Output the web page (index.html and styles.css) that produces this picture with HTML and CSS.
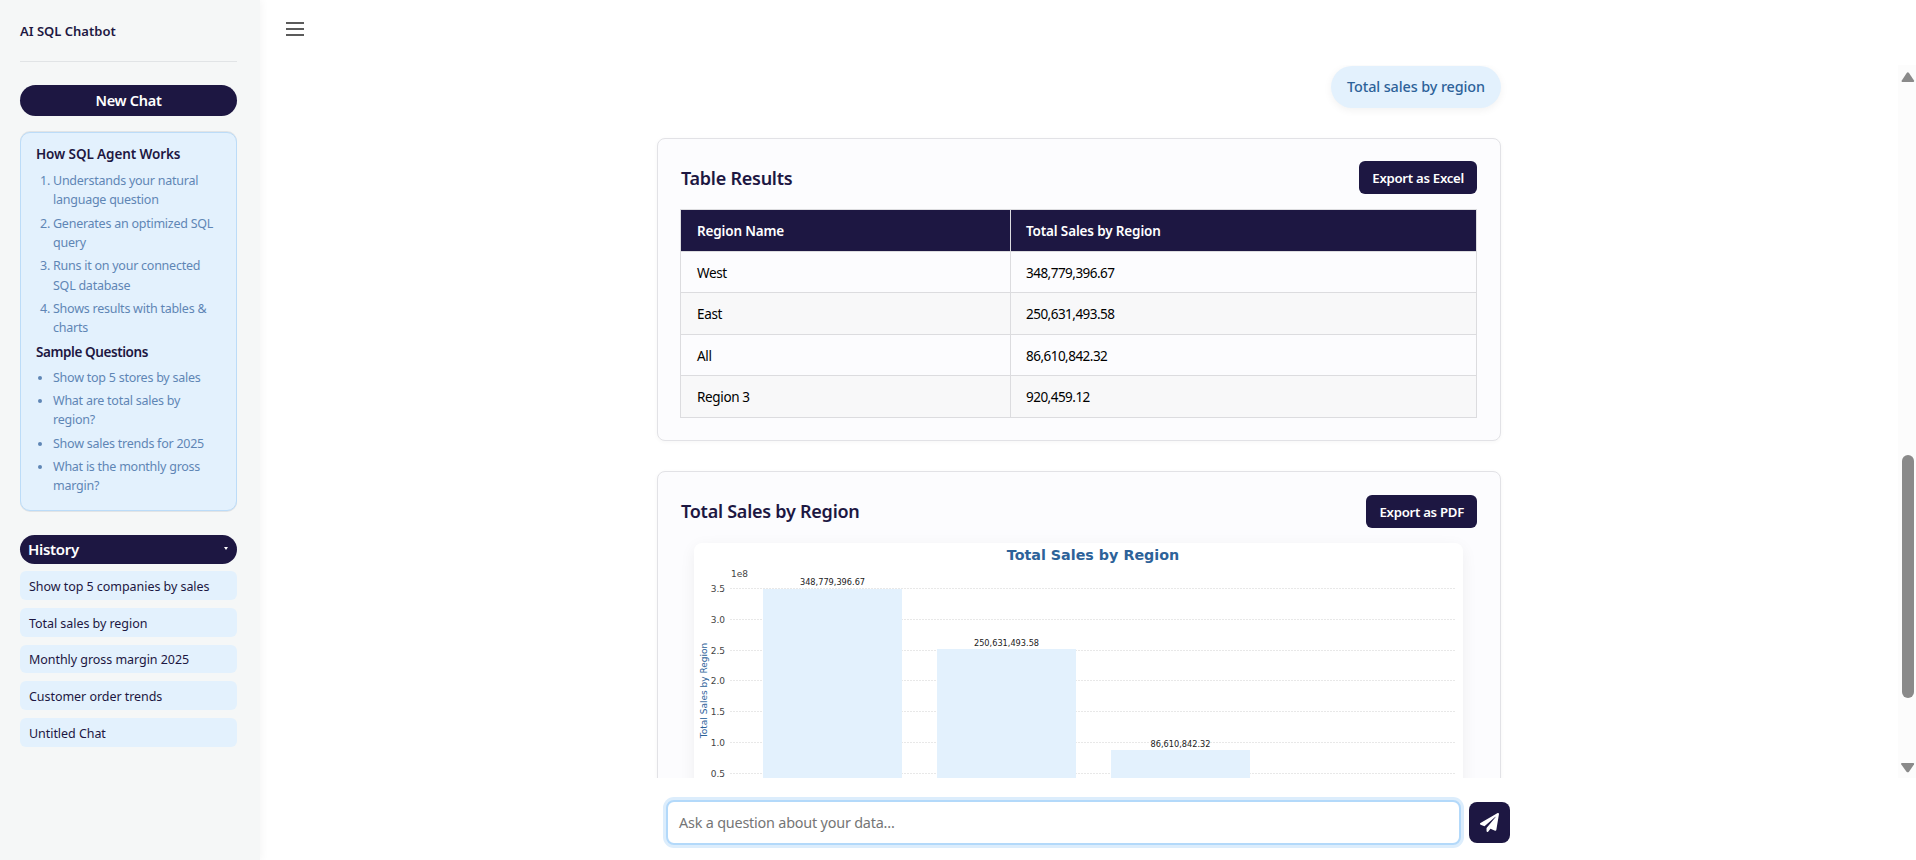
FILE: index.html
```html
<!DOCTYPE html>
<html lang="en">
<head>
<meta charset="utf-8">
<title>AI SQL Chatbot</title>
<link rel="stylesheet" href="styles.css">
</head>
<body>
<div class="app">
  <aside class="sidebar">
    <div class="brand">AI SQL Chatbot</div>
    <button class="new-chat">New Chat</button>
    <div class="info">
      <h3 class="info-title">How SQL Agent Works</h3>
      <ol class="info-list">
        <li>Understands your natural language question</li>
        <li>Generates an optimized SQL query</li>
        <li>Runs it on your connected SQL database</li>
        <li>Shows results with tables &amp; charts</li>
      </ol>
      <h3 class="info-title sample">Sample Questions</h3>
      <ul class="info-list sample-list">
        <li>Show top 5 stores by sales</li>
        <li>What are total sales by region?</li>
        <li>Show sales trends for 2025</li>
        <li>What is the monthly gross margin?</li>
      </ul>
    </div>
    <div class="history-head"><span>History</span><i class="caret"></i></div>
    <div class="history-list">
      <div class="history-item">Show top 5 companies by sales</div>
      <div class="history-item">Total sales by region</div>
      <div class="history-item">Monthly gross margin 2025</div>
      <div class="history-item">Customer order trends</div>
      <div class="history-item">Untitled Chat</div>
    </div>
  </aside>
  <main class="main">
    <div class="topbar">
      <button class="menu-btn" aria-label="Menu"><span></span><span></span><span></span></button>
    </div>
    <div class="chat-row">
      <div class="chat">
        <div class="chat-inner">
          <div class="bubble-row"><div class="bubble">Total sales by region</div></div>
          <section class="card">
            <div class="card-head">
              <h2 class="card-title">Table Results</h2>
              <button class="export">Export as Excel</button>
            </div>
            <table class="results">
              <thead><tr><th class="col-a">Region Name</th><th>Total Sales by Region</th></tr></thead>
              <tbody>
                <tr><td>West</td><td>348,779,396.67</td></tr>
                <tr><td>East</td><td>250,631,493.58</td></tr>
                <tr><td>All</td><td>86,610,842.32</td></tr>
                <tr><td>Region 3</td><td>920,459.12</td></tr>
              </tbody>
            </table>
          </section>
          <section class="card">
            <div class="card-head">
              <h2 class="card-title">Total Sales by Region</h2>
              <button class="export">Export as PDF</button>
            </div>
            <div class="chart-box">
              <svg class="chart" width="769" height="320" viewBox="0 0 769 320">
                <text class="c-title" x="399" y="17" text-anchor="middle">Total Sales by Region</text>
                <text class="c-tick" x="37" y="34">1e8</text>
                <g class="c-grid">
                  <line x1="36" x2="762" y1="45.5" y2="45.5"/>
                  <line x1="36" x2="762" y1="76.5" y2="76.5"/>
                  <line x1="36" x2="762" y1="107.5" y2="107.5"/>
                  <line x1="36" x2="762" y1="137.5" y2="137.5"/>
                  <line x1="36" x2="762" y1="168.5" y2="168.5"/>
                  <line x1="36" x2="762" y1="199.5" y2="199.5"/>
                  <line x1="36" x2="762" y1="230.5" y2="230.5"/>
                </g>
                <g class="c-tick" text-anchor="end">
                  <text x="31" y="49">3.5</text>
                  <text x="31" y="80">3.0</text>
                  <text x="31" y="111">2.5</text>
                  <text x="31" y="141">2.0</text>
                  <text x="31" y="172">1.5</text>
                  <text x="31" y="203">1.0</text>
                  <text x="31" y="234">0.5</text>
                </g>
                <text class="c-ylabel" transform="translate(13 147.500) rotate(-90)" text-anchor="middle">Total Sales by Region</text>
                <g class="c-bar">
                  <rect x="69" y="46" width="139" height="274"/>
                  <rect x="243" y="106" width="139" height="214"/>
                  <rect x="417" y="207" width="139" height="113"/>
                </g>
                <g class="c-val" text-anchor="middle">
                  <text x="138.500" y="42">348,779,396.67</text>
                  <text x="312.500" y="103">250,631,493.58</text>
                  <text x="486.500" y="204">86,610,842.32</text>
                </g>
              </svg>
            </div>
          </section>
        </div>
      </div>
      <div class="scrollbar">
        <svg class="arrow" width="18" height="20" viewBox="0 0 18 20"><path d="M4 17 L15.500 17 Q16.500 16.700 16 15.500 L11 8 Q9.800 6.500 8.700 8 L3.800 15.500 Q3.200 16.700 4 17 Z"/></svg>
        <div class="track"><div class="thumb"></div></div>
        <svg class="arrow" width="18" height="20" viewBox="0 0 18 20"><path d="M3.500 5 L15.500 5 Q16.500 5.300 16 6.500 L11 13.700 Q9.700 15 8.500 13.700 L3.300 6.500 Q2.800 5.300 3.500 5 Z"/></svg>
      </div>
    </div>
    <div class="composer">
      <div class="composer-inner">
        <div class="ask">Ask a question about your data...</div>
        <button class="send" aria-label="Send">
          <svg width="19" height="19" viewBox="0 0 512 512"><path fill="#fff" d="M476 3.200 12.500 270.600c-18.100 10.400-15.800 35.600 2.200 43.200L121 358.400l287.300-253.200c5.500-4.900 13.300 2.600 8.600 8.300L176 407v80.500c0 23.600 28.500 32.900 42.500 15.800L282 426l124.600 52.200c14.200 6 30.400-2.900 33-18.200l72-432C515 7.800 493.300-6.800 476 3.200z"/></svg>
        </button>
      </div>
    </div>
  </main>
</div>
</body>
</html>
```
FILE: styles.css
```css
* { box-sizing: border-box; }
html, body { margin: 0; height: 100%; overflow: hidden; }
body { font-family: "Noto Sans", "Open Sans", sans-serif; color: #1d1742; background: #fff; }
h2, h3 { margin: 0; }
button { font-family: inherit; border: 0; cursor: pointer; }

.app { display: flex; height: 860px; }

.sidebar {
  width: 260px; flex: none; padding: 0 23px 0 20px;
  background: #f5f7f7; box-shadow: 2px 0 8px rgba(0, 0, 0, .04);
  display: flex; flex-direction: column; z-index: 1;
}
.brand {
  height: 62px; padding-top: 21px; border-bottom: 1px solid #e1e4e6;
  font-size: 13px; font-weight: 600; line-height: 20px;
}
.new-chat {
  margin-top: 23px; height: 31px; padding: 0 0 2px; border-radius: 16px; background: #1d1742; color: #fff;
  font-size: 14.500px; font-weight: 600; letter-spacing: -.3px;
}
.info {
  margin-top: 16px; height: 379px; padding: 11px 15px 0;
  background: #e3f1fd; border: 1px solid #bcdcf8; border-radius: 10px;
  box-shadow: 0 -1px 0 #e1e4e6, 0 1px 0 #e1e4e6;
}
.info-title { font-size: 13.500px; font-weight: 600; line-height: 20px; letter-spacing: -.1px; }
.info-title.sample { margin-top: 2px; letter-spacing: -.42px; }
.info-list { margin: 7px 0 0; padding: 0 0 0 17px; color: #5f86b5; font-size: 12.500px; line-height: 19.200px; letter-spacing: -.25px; }
.info-list li { margin-bottom: 4.250px; }
.sample-list { margin-top: 6px; }
.history-head {
  margin-top: 24px; height: 29px; padding: 0 9px 2px 8px; border-radius: 15px; background: #1d1742; color: #fff;
  display: flex; align-items: center; justify-content: space-between;
  font-size: 15px; font-weight: 600; letter-spacing: -.3px;
}
.caret { width: 0; height: 0; border: 2.500px solid transparent; border-top: 3px solid #fff; border-bottom: 0; }
.history-list { margin-top: 7px; display: flex; flex-direction: column; gap: 8px; }
.history-item {
  height: 28.750px; padding: 2px 9px 0; border-radius: 6px; background: #e3f1fd; color: #1d1742;
  display: flex; align-items: center; font-size: 12.500px; letter-spacing: -.05px;
}

.main { flex: 1; min-width: 0; display: flex; flex-direction: column; }
.topbar { height: 65px; flex: none; padding: 22px 0 0 26px; }
.menu-btn { display: flex; flex-direction: column; justify-content: space-between; width: 18px; height: 14px; padding: 0; background: none; }
.menu-btn span { display: block; height: 2px; background: #5b5b5b; }

.chat-row { flex: 1; min-height: 0; display: flex; }
.chat { flex: 1; min-width: 0; overflow: hidden; }
.chat-inner { width: 844px; margin: 0 auto; padding-top: 1px; }
.bubble-row { display: flex; justify-content: flex-end; }
.bubble {
  height: 42px; padding: 0 16px 2px; border-radius: 21px; background: #e3f1fd; color: #2d6299;
  display: flex; align-items: center; font-size: 14.400px; font-weight: 500; letter-spacing: -.1px;
  box-shadow: 0 2px 8px rgba(0, 0, 0, .06);
}
.card {
  margin-top: 30px; padding: 22px 23px; background: #fcfcfe;
  border: 1px solid #e2e2e6; border-radius: 8px; box-shadow: 0 1px 4px rgba(0, 0, 0, .04);
}
.card + .card { padding-top: 23px; }
.card-head { display: flex; align-items: center; justify-content: space-between; margin-bottom: 15px; }
.card-title { font-size: 18px; font-weight: 600; letter-spacing: -.25px; line-height: 24px; }
.export {
  height: 33px; padding: 1px 13px 0; border-radius: 6px; background: #1d1742; color: #fff;
  font-size: 13.200px; font-weight: 600; letter-spacing: -.28px;
}
.results { width: 797px; margin-left: -1px; border-collapse: collapse; table-layout: fixed; font-size: 13.500px; letter-spacing: -.35px; }
.results th, .results td { border: 1px solid #dcdcdf; padding: 1px 16px 0; height: 41.600px; text-align: left; color: #000; }
.results th { background: #1d1742; color: #fff; font-weight: 600; letter-spacing: -.15px; }
.results th + th, .results td + td { padding-left: 15px; }
.results td + td { letter-spacing: -.52px; }
.results .col-a { width: 330px; }
.results tbody tr:first-child td { padding-top: 3px; }
.results tbody tr:nth-child(even) td { background: #f8f8f9; }

.chart-box { width: 769px; margin-left: 13px; background: #fff; border-radius: 8px; box-shadow: 0 4px 16px rgba(0, 0, 0, .06); }
.chart { display: block; }
.chart text { font-family: "DejaVu Sans", sans-serif; }
.c-title { font-size: 14.300px; font-weight: 700; fill: #2d6299; }
.c-tick { font-size: 9px; fill: #444; }
.c-val { font-size: 8.200px; fill: #222; }
.c-ylabel { font-size: 9px; fill: #2d6299; }
.c-grid line { stroke: #e8e8e8; stroke-width: 1; stroke-dasharray: 2 1; }
.c-bar rect { fill: #e3f1fd; }

.scrollbar { width: 18px; flex: none; background: #fcfcfc; display: flex; flex-direction: column; }
.arrow { display: block; flex: none; fill: #8a8a8a; }
.track { flex: 1; }
.thumb { width: 11.500px; height: 243px; margin: 370px 0 0 4px; border-radius: 6px; background: #8a8a8a; }

.composer { height: 82px; flex: none; display: flex; justify-content: center; padding-top: 22px; }
.composer-inner { width: 844px; display: flex; gap: 8px; align-items: flex-start; }
.ask {
  flex: 1; height: 45px; padding: 0 11px; border: 2px solid #b3d9fa; border-radius: 8px; background: #fff;
  display: flex; align-items: center; color: #757575; font-size: 14.400px; letter-spacing: -.2px;
  box-shadow: 0 0 0 3px #dcedfc;
}
.send { width: 41px; height: 41px; margin-top: 2px; flex: none; border-radius: 8px; background: #1d1742; display: flex; align-items: center; justify-content: center; padding: 0; }
```
